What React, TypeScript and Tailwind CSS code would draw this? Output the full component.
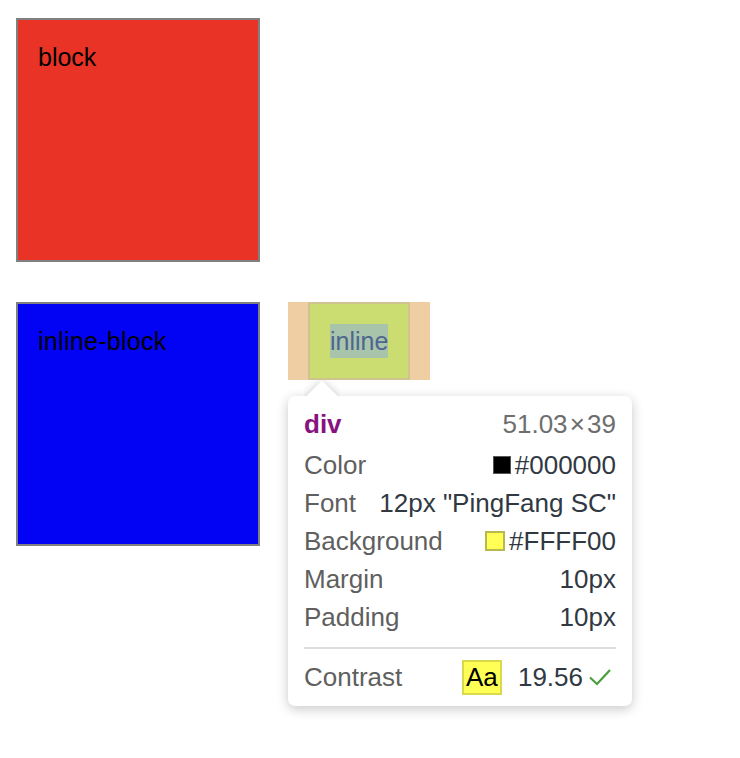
import React from 'react';

const rows: { label: string; value: React.ReactNode }[] = [
  {
    label: 'Color',
    value: (
      <span className="flex items-center gap-[4px]">
        <span className="w-[18px] h-[18px] bg-black border border-[#555]" />
        <span>#000000</span>
      </span>
    ),
  },
  { label: 'Font', value: '12px "PingFang SC"' },
  {
    label: 'Background',
    value: (
      <span className="flex items-center gap-[4px]">
        <span className="w-[20px] h-[20px] bg-[#ffff55] border-2 border-[#b8b84c]" />
        <span>#FFFF00</span>
      </span>
    ),
  },
  { label: 'Margin', value: '10px' },
  { label: 'Padding', value: '10px' },
];

const App: React.FC = () => {
  return (
    <div
      className="relative w-[740px] h-[758px] bg-white overflow-hidden"
      style={{ fontFamily: '"Liberation Sans", Arial, sans-serif' }}
    >
      {/* block */}
      <div className="ml-[16px] mt-[18px] w-[244px] h-[244px] border-2 border-[#808080] bg-[#e83326] px-[20px] pt-[20px] text-[25px] leading-[34px] text-black">
        block
      </div>

      {/* inline-block + inline */}
      <div className="flex items-start gap-[28px] ml-[16px] mt-[40px]">
        <div className="w-[244px] h-[244px] border-2 border-[#808080] bg-[#0202f4] px-[20px] pt-[20px] text-[25px] leading-[34px] text-black tracking-[0.3px]">
          inline-block
        </div>
        <div className="flex h-[78px] bg-[#f0cea3] px-[20px]">
          <div className="flex items-center border-2 border-[#cfc48e] bg-[#cbdc70] px-[20px]">
            <span className="bg-[#a8c4ab] text-[25px] leading-[34px] text-[#4e6590]">inline</span>
          </div>
        </div>
      </div>

      {/* inspect tooltip */}
      <div className="absolute left-[288px] top-[396px] w-[344px] rounded-[7px] bg-white shadow-[0_3px_12px_rgba(0,0,0,0.22)] px-[16px] pt-[9px] pb-[10px] text-[26px] leading-[38px]">
        <div className="flex justify-between">
          <span className="font-bold text-[#881280]">div</span>
          <span className="text-[#6e6e6e]">51.03&#8202;×&#8202;39</span>
        </div>
        <div className="mt-[3px]">
          {rows.map((r) => (
            <div key={r.label} className="flex justify-between items-center h-[38px]">
              <span className="text-[#5f5f5f]">{r.label}</span>
              <span className="text-[#303942]">{r.value}</span>
            </div>
          ))}
        </div>
        <div className="mt-[11px] h-[2px] bg-[#dddddd]" />
        <div className="flex items-center h-[38px] mt-[9px]">
          <span className="text-[#5f5f5f]">Contrast</span>
          <span className="ml-auto flex items-center justify-center w-[40px] h-[35px] bg-[#ffff55] border-2 border-[#d9d94c] text-black">
            Aa
          </span>
          <span className="ml-[16px] text-[#303942]">19.56</span>
          <svg width="26" height="26" viewBox="0 0 26 26" className="ml-[4px] mr-[3px]">
            <path d="M3 13.5 L10 20 L23 6" fill="none" stroke="#4a9e3c" strokeWidth="2.2" />
          </svg>
        </div>
      </div>

      {/* arrow */}
      <div className="absolute left-[304px] top-[380px] w-[36px] h-[16px] overflow-hidden">
        <div className="absolute left-[7px] top-[5px] w-[22px] h-[22px] rotate-45 bg-white shadow-[0_0_8px_rgba(0,0,0,0.2)]" />
      </div>
    </div>
  );
};

export default App;
